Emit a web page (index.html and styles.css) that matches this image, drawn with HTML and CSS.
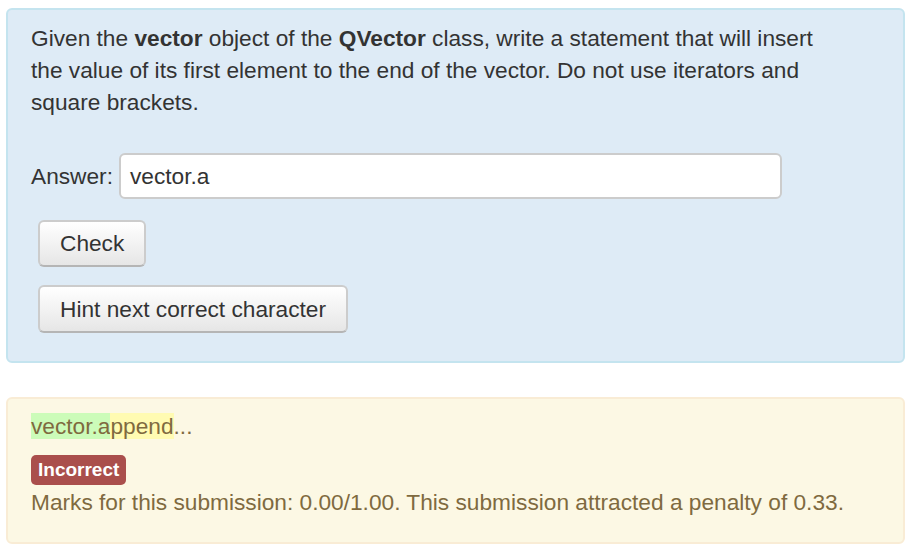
FILE: index.html
```html
<!DOCTYPE html>
<html>
<head>
<meta charset="utf-8">
<link rel="stylesheet" href="styles.css">
</head>
<body>
<div class="page">
  <div class="formulation">
    <p class="qtext">Given the <b>vector</b> object of the <b>QVector</b> class, write a statement that will insert the value of its first element to the end of the vector. Do not use iterators and square brackets.</p>
    <div class="answer-row">
      <label class="answer-label">Answer:</label>
      <div class="answer-input">vector.a</div>
    </div>
    <div class="buttons">
      <button class="btn btn-check">Check</button>
      <button class="btn btn-hint">Hint next correct character</button>
    </div>
  </div>
  <div class="outcome">
    <div class="hint-line"><span class="hl-correct">vector.a</span><span class="hl-hint">ppend</span>...</div>
    <div class="badge-row"><span class="badge">Incorrect</span></div>
    <div class="marks">Marks for this submission: 0.00/1.00. This submission attracted a penalty of 0.33.</div>
  </div>
</div>
</body>
</html>
```

FILE: styles.css
```css
html, body {
  margin: 0;
  padding: 0;
  background: #ffffff;
}
body {
  font-family: "Liberation Sans", Arial, Helvetica, sans-serif;
  font-size: 22.7px;
  color: #333333;
}
.page {
  padding: 8px 7px 0 6px;
  display: flex;
  flex-direction: column;
  gap: 34px;
}
.formulation {
  background: #deebf6;
  border: 2px solid #c4e4ef;
  border-radius: 6px;
  padding: 12px 23px 28px 23px;
}
.qtext {
  margin: 0;
  line-height: 32px;
  max-width: 800px;
}
.answer-row {
  display: flex;
  align-items: center;
  margin-top: 35px;
}
.answer-label {
  width: 88px;
}
.answer-input {
  box-sizing: border-box;
  width: 663px;
  height: 46px;
  background: #ffffff;
  border: 2px solid #cccccc;
  border-radius: 6px;
  padding: 0 9px;
  display: flex;
  align-items: center;
}
.buttons {
  display: flex;
  flex-direction: column;
  align-items: flex-start;
  gap: 18px;
  margin-top: 21px;
  padding-left: 7px;
}
.btn {
  font-family: inherit;
  font-size: 22.7px;
  color: #333333;
  background: linear-gradient(#ffffff, #e6e6e6);
  border: 2px solid #cccccc;
  border-bottom-color: #b5b5b5;
  border-radius: 6px;
  padding: 0 20px;
  height: 48px;
  box-shadow: inset 0 1px 0 rgba(255,255,255,0.3);
}
.btn-check {
  height: 47px;
}
.outcome {
  background: #fcf8e4;
  border: 2px solid #f9ecd5;
  border-radius: 6px;
  padding: 14px 23px 25px 23px;
  color: #7f6a3f;
}
.hint-line {
  line-height: 26px;
}
.hl-correct {
  background: #ccfcb9;
}
.hl-hint {
  background: #fffbb2;
}
.badge-row {
  margin-top: 16px;
  display: flex;
}
.badge {
  background: #aa4f4c;
  color: #ffffff;
  font-weight: bold;
  font-size: 19px;
  line-height: 30px;
  padding: 0 7px;
  border-radius: 5px;
}
.marks {
  line-height: 30px;
  margin-top: 2px;
}
```
